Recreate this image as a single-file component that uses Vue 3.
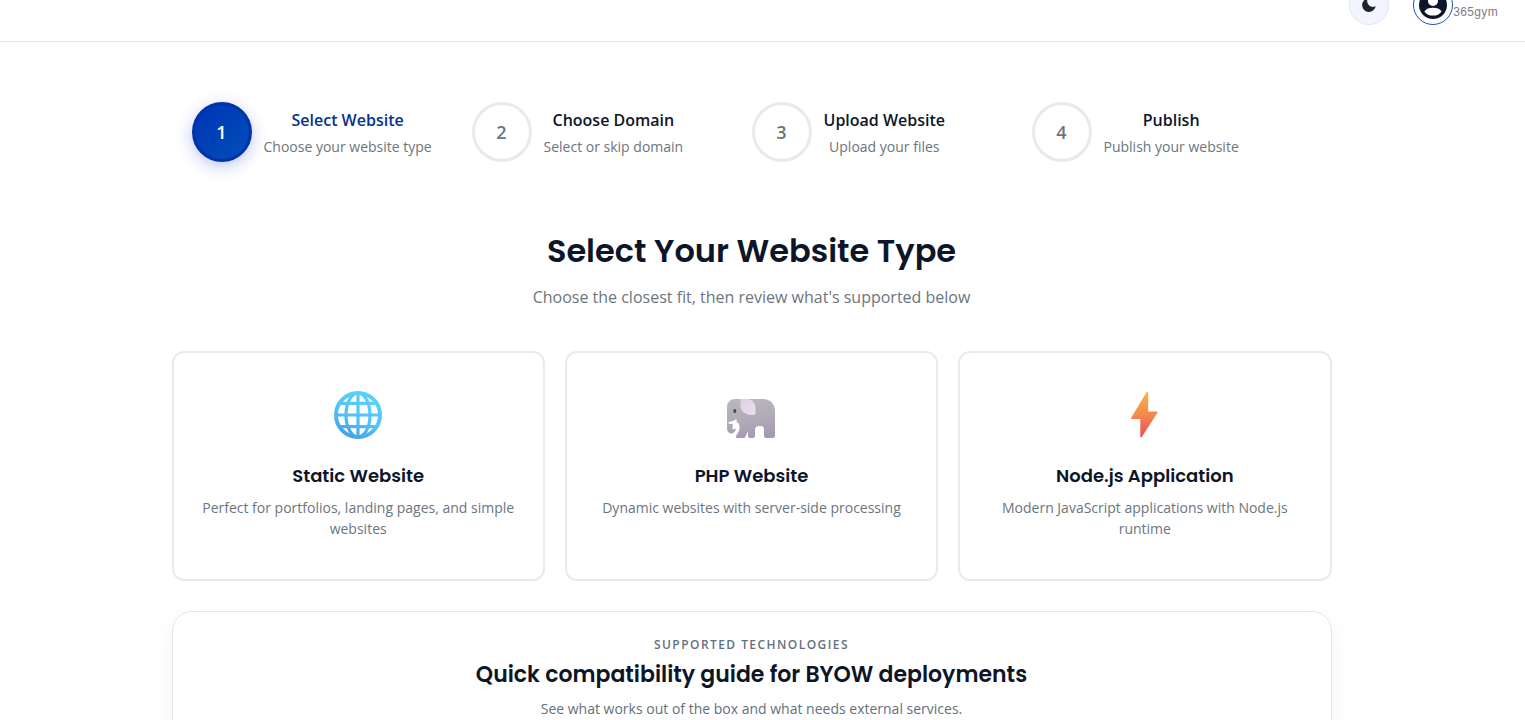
<script setup>
import { ref } from 'vue'

const steps = [
  { title: 'Select Website', text: 'Choose your website type' },
  { title: 'Choose Domain', text: 'Select or skip domain' },
  { title: 'Upload Website', text: 'Upload your files' },
  { title: 'Publish', text: 'Publish your website' },
]
const current = ref(0)

const types = [
  { id: 'static', title: 'Static Website', text: 'Perfect for portfolios, landing pages, and simple websites' },
  { id: 'php', title: 'PHP Website', text: 'Dynamic websites with server-side processing' },
  { id: 'node', title: 'Node.js Application', text: 'Modern JavaScript applications with Node.js runtime' },
]
</script>

<template>
  <div class="page">
    <header class="topbar">
      <button class="theme" type="button" aria-label="Toggle dark mode">
        <svg width="16" height="16" viewBox="0 0 16 16" aria-hidden="true">
          <path d="M7 1.400A6.800 6.800 0 1 0 14.700 9 5.600 5.600 0 0 1 7 1.400Z" fill="#222326" />
        </svg>
      </button>
      <a class="account" href="#">
        <span class="avatar">
          <svg width="28" height="28" viewBox="0 0 28 28" aria-hidden="true">
            <circle cx="14" cy="14" r="14" fill="#0d1628" />
            <circle cx="14" cy="10" r="5" fill="#fff" />
            <path d="M5.4 20.4C7 17.8 10.300 16.800 14 16.800s7 1 8.600 3.600C20.700 23.200 17.600 24.600 14 24.600s-6.700-1.400-8.600-4.200Z" fill="#fff" />
          </svg>
        </span>
        <span class="user">365gym</span>
      </a>
    </header>

    <main class="content">
      <ol class="steps">
        <li v-for="(step, i) in steps" :key="step.title" class="step" :class="{ active: i === current }">
          <span class="number">{{ i + 1 }}</span>
          <div class="label">
            <div class="step-title">{{ step.title }}</div>
            <div class="step-text">{{ step.text }}</div>
          </div>
        </li>
      </ol>

      <div class="intro">
        <h1>Select Your Website Type</h1>
        <p>Choose the closest fit, then review what's supported below</p>
      </div>

      <div class="types">
        <button v-for="type in types" :key="type.id" class="card" type="button">
          <svg v-if="type.id === 'static'" class="icon" viewBox="0 0 48 48" aria-hidden="true">
            <defs>
              <linearGradient id="globe" gradientUnits="userSpaceOnUse" x1="34" y1="0" x2="12" y2="48">
                <stop offset="0" stop-color="#5bd3fa" />
                <stop offset="0.6" stop-color="#52c0f4" />
                <stop offset="1" stop-color="#4499e8" />
              </linearGradient>
            </defs>
            <g fill="none" stroke="url(#globe)" stroke-width="3.200">
              <circle cx="24" cy="24" r="22" stroke-width="4" />
              <ellipse cx="24" cy="24" rx="12" ry="22" />
              <path d="M6 12.300h36M6 35.700h36" />
              <path d="M22.400 2h3.200v44h-3.200ZM2 22.400h44v3.200H2Z" fill="url(#globe)" stroke="none" />
            </g>
          </svg>
          <svg v-else-if="type.id === 'php'" class="icon" viewBox="0 0 48 48" aria-hidden="true">
            <defs>
              <linearGradient id="hide" x1="0.3" y1="0" x2="0.5" y2="1">
                <stop offset="0" stop-color="#b9b7bb" />
                <stop offset="0.55" stop-color="#b0abb5" />
                <stop offset="1" stop-color="#a699b3" />
              </linearGradient>
              <linearGradient id="ear" x1="0" y1="0" x2="1" y2="1">
                <stop offset="0" stop-color="#dcd2e1" />
                <stop offset="1" stop-color="#ecdff2" />
              </linearGradient>
            </defs>
            <path d="M8 8H36c7.500 0 12 5 12 12V45c0 1.200-.8 2-2 2H39c-1.200 0-2-.8-2-2V39c0-3-1-4-3-4h-2c-2.500 0-4 1.500-4 4V45c0 1.200-.8 2-2 2h-3c-1.200 0-2-.8-2-2V40L18.500 45.500c-.5 1-1.200 1.500-2.200 1.500H10.500c-1.300 0-2-1-1.400-2.200C11 42 13 39 12.500 35c-.3-2.500-2-4-4-4C6.500 31 5.500 33 5.500 35V37c0 1 .5 1.500 1.200 1.200L8.800 37.500C9 40 7 42.500 4.500 42.500 1.500 42.500 0 40 0 37V16c0-4.500 3.500-8 8-8Z" fill="url(#hide)" />
            <path d="M2.500 30.700c2.200-.2 4.200-.7 5.700-1.900.9-.6 2 .1 1.600 1.200-.8 2.200-4 3.200-7.200 2.900-1.500-.2-1.500-2-.1-2.200Z" fill="#fff" />
            <path d="M13.500 8h6.500c5 0 8.500 4.200 8.500 9.500v5c0 .8-.5 1.300-1.300 1.300H23c-5.500-.5-9.500-4-9.500-9Z" fill="url(#ear)" />
            <ellipse cx="7.800" cy="20" rx="1.500" ry="2" fill="#494359" />
          </svg>
          <svg v-else class="icon" viewBox="0 0 48 48" aria-hidden="true">
            <defs>
              <linearGradient id="bolt" x1="0" y1="0" x2="0" y2="1">
                <stop offset="0" stop-color="#f5b84c" />
                <stop offset="0.5" stop-color="#f5884d" />
                <stop offset="1" stop-color="#ec4b59" />
              </linearGradient>
            </defs>
            <path d="M25.500 1.300c.8-1 1.700-.6 1.700.6V20.500h8.400c1 0 1.300.7.700 1.500L20.800 46c-.7 1-1.500.7-1.500-.5V28h-8c-1 0-1.400-.8-.8-1.700Z" fill="url(#bolt)" />
          </svg>
          <span class="card-title">{{ type.title }}</span>
          <span class="card-text">{{ type.text }}</span>
        </button>
      </div>

      <section class="guide">
        <div class="eyebrow">SUPPORTED TECHNOLOGIES</div>
        <h2>Quick compatibility guide for BYOW deployments</h2>
        <p>See what works out of the box and what needs external services.</p>
      </section>
    </main>
  </div>
</template>

<style>
body {
  margin: 0;
  background: #fff;
}
</style>

<style scoped>
.page {
  display: flex;
  flex-direction: column;
  height: 100vh;
  overflow: hidden;
  box-sizing: border-box;
  font-family: 'Open Sans', 'Noto Sans', sans-serif;
  color: #0d1628;
}
.topbar {
  display: flex;
  flex-shrink: 0;
  justify-content: flex-end;
  align-items: center;
  gap: 24px;
  margin-top: -31px;
  padding: 16px 27px 16px 24px;
  border-bottom: 1px solid #e7e8ea;
}
.theme {
  display: flex;
  align-items: center;
  justify-content: center;
  width: 40px;
  height: 40px;
  padding: 0;
  border: 1px solid #e3e5f4;
  border-radius: 50%;
  background: #f2f4ff;
}
.account {
  display: flex;
  align-items: center;
  color: #7b8087;
  text-decoration: none;
}
.avatar {
  display: flex;
  align-items: center;
  justify-content: center;
  box-sizing: border-box;
  width: 40px;
  height: 40px;
  border: 1px solid #1455b5;
  border-radius: 50%;
}
.user {
  padding-top: 14px;
  font: 12px/16px 'Liberation Sans', Arial, sans-serif;
  letter-spacing: 0.03em;
}
.content {
  box-sizing: border-box;
  flex-shrink: 0;
  width: 100%;
  max-width: 1182px;
  margin: 0 auto;
  padding: 60px 22px 40px 0;
}
.steps {
  display: grid;
  grid-template-columns: repeat(4, 1fr);
  margin: 0;
  padding: 0 20px;
  list-style: none;
}
.step {
  display: flex;
  align-items: center;
  gap: 12px;
}
.number {
  display: flex;
  flex-shrink: 0;
  align-items: center;
  justify-content: center;
  box-sizing: border-box;
  width: 60px;
  height: 60px;
  border: 3px solid #e9eaec;
  border-radius: 50%;
  color: #6c757d;
  font-size: 18px;
  font-weight: 600;
}
.active .number {
  border-color: #0033ab;
  background: linear-gradient(135deg, #0033b5, #0050b8);
  color: #fff;
  box-shadow: 0 4px 16px rgba(20, 50, 210, 0.28);
}
.label {
  padding-top: 2px;
  text-align: center;
}
.step-title {
  margin-bottom: 4px;
  font-size: 16px;
  font-weight: 600;
  line-height: 24px;
}
.active .step-title {
  color: #05318f;
}
.step-text {
  color: #6c757d;
  font-size: 14px;
  line-height: 22px;
}
.intro {
  margin: 69px 0 42px;
  text-align: center;
}
h1,
h2,
p {
  margin: 0;
}
h1,
h2,
.card-title {
  font-family: Poppins, Inter, 'Open Sans', sans-serif;
  font-weight: 600;
}
h1 {
  margin-bottom: 14px;
  font-size: 32px;
  line-height: 40px;
}
.intro p {
  color: #6c757d;
  font-size: 16px;
  line-height: 24px;
}
.types {
  display: grid;
  grid-template-columns: repeat(3, 1fr);
  gap: 20px;
}
.card {
  display: flex;
  flex-direction: column;
  align-items: center;
  justify-content: flex-start;
  padding: 38px 24px 40px;
  border: 2px solid #e9eaec;
  border-radius: 12px;
  background: #fff;
  color: inherit;
  font: inherit;
}
.icon {
  width: 48px;
  height: 48px;
  margin-bottom: 24px;
}
.card-title {
  margin-bottom: 8px;
  font-size: 18px;
  line-height: 26px;
}
.card-text {
  color: #6c757d;
  font-size: 14px;
  line-height: 21px;
}
.guide {
  margin-top: 30px;
  padding: 24px 24px 32px;
  border: 1px solid #e4e7ea;
  border-radius: 20px;
  box-shadow: 0 8px 24px rgba(15, 23, 42, 0.05);
  text-align: center;
}
.eyebrow {
  color: #64707d;
  font-size: 12px;
  font-weight: 600;
  letter-spacing: 0.12em;
  line-height: 18px;
}
h2 {
  margin: 4px 0 6px;
  font-size: 22px;
  line-height: 34px;
}
.guide p {
  color: #64707d;
  font-size: 14px;
  line-height: 21px;
}
</style>
